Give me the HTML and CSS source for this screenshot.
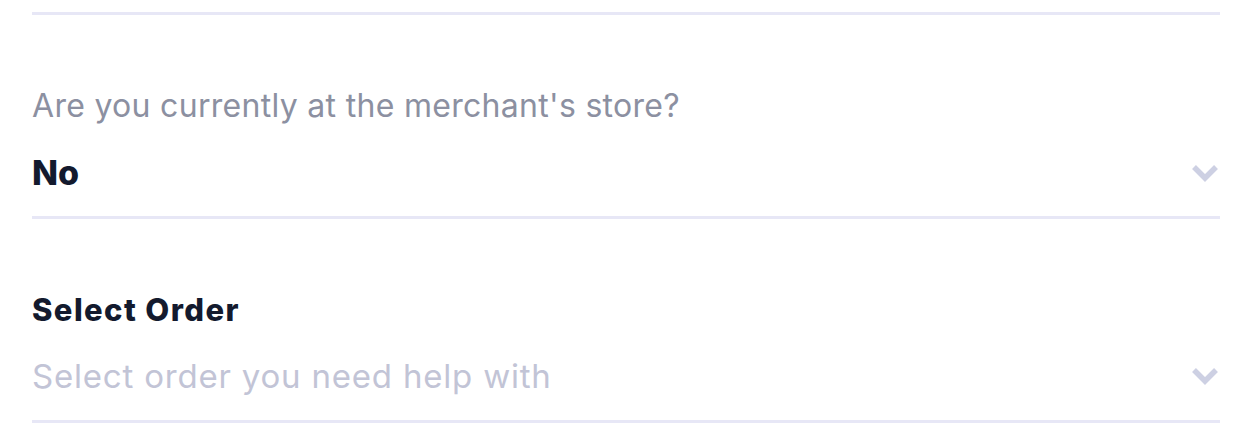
FILE: index.html
```html
<!DOCTYPE html>
<html lang="en">
<head>
<meta charset="utf-8">
<title>Help form</title>
<link rel="stylesheet" href="styles.css">
</head>
<body>
<div class="form">
  <div class="divider"></div>
  <div class="field">
    <div class="label muted">Are you currently at the merchant's store?</div>
    <div class="select">
      <span class="value">No</span>
      <svg class="chevron" viewBox="0 0 28 18" width="28" height="18" aria-hidden="true"><polyline points="3,3 14,14 25,3" fill="none" stroke="currentColor" stroke-width="5.5" stroke-linejoin="miter"/></svg>
    </div>
  </div>
  <div class="field">
    <div class="label strong">Select Order</div>
    <div class="select select-empty">
      <span class="placeholder">Select order you need help with</span>
      <svg class="chevron" viewBox="0 0 28 18" width="28" height="18" aria-hidden="true"><polyline points="3,3 14,14 25,3" fill="none" stroke="currentColor" stroke-width="5.5" stroke-linejoin="miter"/></svg>
    </div>
  </div>
</div>
</body>
</html>
```
FILE: styles.css
```css
html, body {
  margin: 0;
  padding: 0;
  background: #ffffff;
}
body {
  font-family: Inter, "Noto Sans", "Liberation Sans", sans-serif;
}
.form {
  padding: 12px 22px 0 32px;
}
.divider {
  height: 3px;
  background: #e7e7f6;
}
.field {
  border-bottom: 3px solid #e7e7f6;
  padding-top: 71px;
  padding-bottom: 23px;
}
.label {
  line-height: 40px;
}
.muted {
  font-size: 32px;
  letter-spacing: 0.3px;
  color: #8c90a1;
  font-weight: 400;
}
.strong {
  font-size: 31px;
  letter-spacing: 1.4px;
  color: #131a2e;
  font-weight: 800;
}
.select {
  display: flex;
  align-items: center;
  justify-content: space-between;
  margin-top: 27px;
}
.select-empty {
  margin-top: 25px;
}
.value {
  font-size: 34px;
  line-height: 40px;
  font-weight: 800;
  letter-spacing: 0;
  color: #131a2e;
}
.placeholder {
  font-size: 33px;
  line-height: 42px;
  letter-spacing: 0.8px;
  color: #c2c4d6;
}
.chevron {
  color: #cdd0e3;
  margin-right: 1px;
}
```
